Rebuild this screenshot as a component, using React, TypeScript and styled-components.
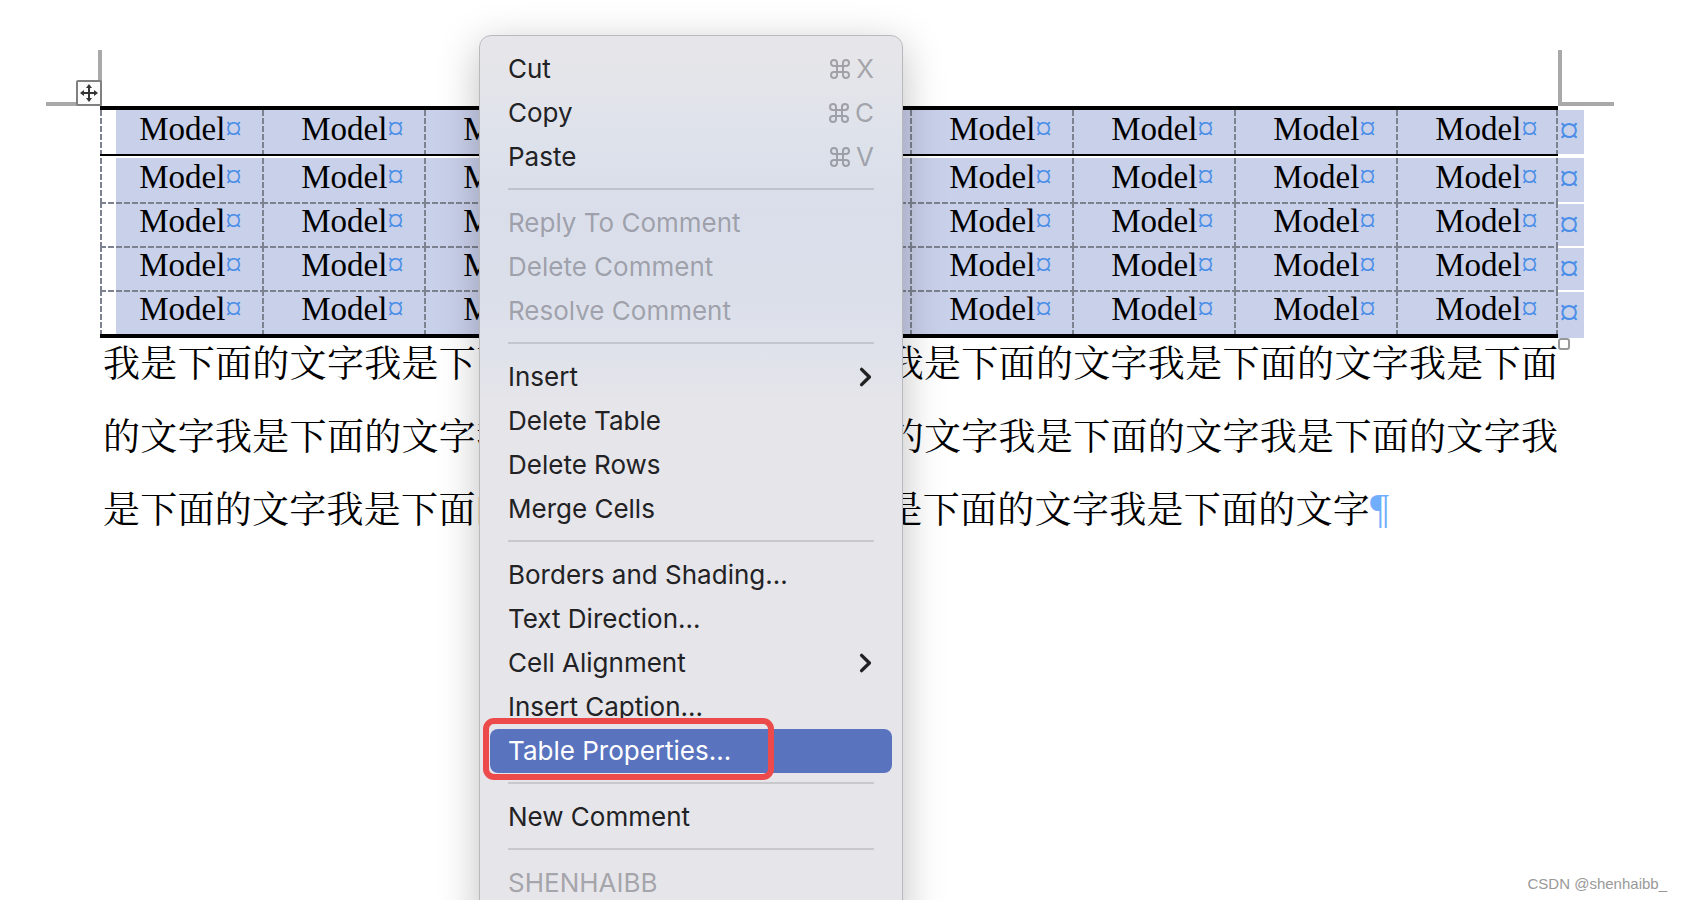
import React from "react";
import styled, { createGlobalStyle, css } from "styled-components";

const GlobalStyle = createGlobalStyle`
  *, *::before, *::after { box-sizing: border-box; }
  body { margin: 0; background: #ffffff; }
`;

const selection = "#c9d0ea";
const markBlue = "#4a8ee8";
const dashH =
  "repeating-linear-gradient(90deg, #7d8290 0 6px, transparent 6px 8px)";
const dashV =
  "repeating-linear-gradient(180deg, #7d8290 0 6px, transparent 6px 8px)";

const Page = styled.main`
  position: relative;
  min-height: 100vh;
  overflow: hidden;
  padding-top: 50px;
  color: #000000;
  font-family: "Liberation Serif", "Times New Roman", serif;
`;

const MarginMarks = styled.div`
  display: flex;
  justify-content: space-between;
  padding: 0 68px 0 46px;
`;

const Corner = styled.div<{ $side: "left" | "right" }>`
  position: relative;
  width: 56px;
  height: 56px;
  border-bottom: 4px solid #a9a9a9;
  ${(p) =>
    p.$side === "left"
      ? css`border-right: 4px solid #a9a9a9;`
      : css`border-left: 4px solid #a9a9a9;`}
`;

const MoveHandle = styled.button`
  position: absolute;
  right: -4px;
  bottom: -4px;
  display: flex;
  align-items: center;
  justify-content: center;
  width: 26px;
  height: 26px;
  padding: 0;
  border: 2px solid #808080;
  border-radius: 2px;
  background: #fbfbfb;
`;

const TableArea = styled.div`
  position: relative;
  margin: 0 98px 0 100px;
`;

const ModelTable = styled.table`
  width: 100%;
  table-layout: fixed;
  border-collapse: separate;
  border-spacing: 0;
  font-size: 33px;
  line-height: 38px;
`;

const MarkColumn = styled.col`
  width: 26px;
`;

const cell = css`
  height: 44px;
  padding: 0 0 4px 19px;
  text-align: center;
  font-weight: 400;
  white-space: nowrap;
  vertical-align: top;
`;

const HeadCell = styled.th`
  ${cell}
  height: 50px;
  border-top: 4px solid #000000;
  border-bottom: 2px solid #000000;
  background: ${dashV} 0 0 / 2px 100% no-repeat,
    linear-gradient(${selection}, ${selection});
  &:first-child {
    background: ${dashV} 0 0 / 2px 100% no-repeat,
      linear-gradient(90deg, #ffffff 16px, ${selection} 16px);
  }
  &:nth-child(9) {
    background: ${dashV} 0 0 / 2px 100% no-repeat,
      ${dashV} 100% 0 / 2px 100% no-repeat,
      linear-gradient(${selection}, ${selection});
  }
`;

const Cell = styled.td<{ $first?: boolean; $last?: boolean }>`
  ${cell}
  ${(p) =>
    p.$first &&
    css`
      height: 46px;
      border-top: 2px solid #ffffff;
    `}
  ${(p) =>
    p.$last &&
    css`
      height: 48px;
      border-bottom: 4px solid #000000;
    `}
  background: ${dashV} 0 0 / 2px 100% no-repeat,
    ${(p) => (p.$first ? "" : `${dashH} 0 0 / 100% 2px no-repeat,`)}
    linear-gradient(${selection}, ${selection}) padding-box;
  &:first-child {
    background: ${dashV} 0 0 / 2px 100% no-repeat,
      ${(p) => (p.$first ? "" : `${dashH} 0 0 / 100% 2px no-repeat,`)}
      linear-gradient(90deg, #ffffff 16px, ${selection} 16px) padding-box;
  }
  &:nth-child(9) {
    background: ${dashV} 0 0 / 2px 100% no-repeat,
      ${dashV} 100% 0 / 2px 100% no-repeat,
      ${(p) => (p.$first ? "" : `${dashH} 0 0 / 100% 2px no-repeat,`)}
      linear-gradient(${selection}, ${selection}) padding-box;
  }
`;

const RowEnd = styled.td<{ $top: number; $bottom: number }>`
  padding: 0 0 0 1px;
  border-top: ${(p) => p.$top}px solid #ffffff;
  border-bottom: ${(p) => p.$bottom}px solid #ffffff;
  background: ${selection};
  color: ${markBlue};
  font-size: 40px;
  line-height: 42px;
  text-align: left;
  vertical-align: top;
`;

const CellMark = styled.span`
  color: ${markBlue};
`;

const ResizeHandle = styled.button`
  position: absolute;
  right: 14px;
  top: 100%;
  width: 12px;
  height: 12px;
  padding: 0;
  border: 2px solid #989898;
  border-radius: 3px;
  background: #ffffff;
`;

const Paragraph = styled.p`
  margin: -13px 124px 0 103px;
  font-family: "Noto Serif CJK SC", "Noto Sans CJK SC", serif;
  font-size: 37px;
  font-weight: 400;
  line-height: 73px;
  text-align: justify;
  text-align-last: justify;
`;

const Pilcrow = styled.span`
  display: inline-block;
  width: 188px;
  color: #70aefc;
  font-family: "Liberation Serif", serif;
  font-weight: 400;
  font-size: 42px;
  line-height: 40px;
  text-align: left;
  text-align-last: left;
`;

const Menu = styled.div`
  position: absolute;
  z-index: 2;
  top: 35px;
  left: 479px;
  width: 424px;
  padding: 11px 10px 24px;
  border: 1px solid #b9b9bd;
  border-radius: 12px;
  background: linear-gradient(
    #e6e5ea 0,
    #e4e5ea 45px,
    #dee2eb 100px,
    #dadeea 170px,
    #dbdfea 260px,
    #dfe2eb 310px,
    #e5e5ea 365px
  );
  box-shadow: 0 10px 40px rgba(0, 0, 0, 0.25);
  font-family: Inter, "Liberation Sans", sans-serif;
  font-size: 26px;
  line-height: 44px;
`;

const MenuItem = styled.button<{ $active?: boolean }>`
  position: relative;
  display: flex;
  align-items: center;
  justify-content: space-between;
  width: 100%;
  height: 44px;
  padding: 0 18px;
  border: 0;
  border-radius: 8px;
  background: ${(p) => (p.$active ? "#5a73bf" : "transparent")};
  color: ${(p) => (p.$active ? "#ffffff" : "#222224")};
  font: inherit;
  text-align: left;
  white-space: nowrap;
  &:disabled {
    color: rgba(60, 60, 67, 0.4);
  }
`;

const Shortcut = styled.span`
  display: flex;
  align-items: center;
  gap: 4px;
  color: rgba(60, 60, 67, 0.4);
`;

const Separator = styled.hr`
  height: 2px;
  margin: 9px 18px 11px;
  border: 0;
  background: rgba(60, 60, 67, 0.17);
`;

const Highlight = styled.span`
  position: absolute;
  top: -11px;
  bottom: -7px;
  left: -7px;
  width: 291px;
  border: 6px solid #ed4a4b;
  border-radius: 11px;
  pointer-events: none;
`;

const Watermark = styled.footer`
  position: absolute;
  right: 15px;
  bottom: 7px;
  color: #999999;
  font-family: "Liberation Sans", Arial, sans-serif;
  font-size: 15px;
  line-height: 18px;
`;

const CommandIcon = () => (
  <svg width="24" height="24" viewBox="0 0 24 24" fill="none" stroke="currentColor" strokeWidth="2" aria-hidden="true">
    <path d="M15 6v12a3 3 0 1 0 3-3H6a3 3 0 1 0 3 3V6a3 3 0 1 0-3 3h12a3 3 0 1 0-3-3" />
  </svg>
);

const Chevron = () => (
  <svg width="16" height="22" viewBox="0 0 16 22" fill="none" stroke="currentColor" strokeWidth="3.4" strokeLinecap="round" strokeLinejoin="round" aria-hidden="true">
    <path d="M3.6 3.4 11.4 11l-7.8 7.6" />
  </svg>
);

const MoveIcon = () => (
  <svg width="18" height="18" viewBox="0 0 18 18" fill="#333333" aria-hidden="true">
    <path d="M9 0 12 4H10V8H14V6L18 9 14 12V10H10V14H12L9 18 6 14H8V10H4V12L0 9 4 6V8H8V4H6Z" />
  </svg>
);

type Entry =
  | { kind: "separator" }
  | {
      kind: "item";
      label: string;
      shortcut?: string;
      submenu?: boolean;
      disabled?: boolean;
      active?: boolean;
    };

const separator: Entry = { kind: "separator" };
const item = (label: string, rest: object = {}): Entry => ({ kind: "item", label, ...rest });

const entries: Entry[] = [
  item("Cut", { shortcut: "X" }),
  item("Copy", { shortcut: "C" }),
  item("Paste", { shortcut: "V" }),
  separator,
  item("Reply To Comment", { disabled: true }),
  item("Delete Comment", { disabled: true }),
  item("Resolve Comment", { disabled: true }),
  separator,
  item("Insert", { submenu: true }),
  item("Delete Table"),
  item("Delete Rows"),
  item("Merge Cells"),
  separator,
  item("Borders and Shading..."),
  item("Text Direction..."),
  item("Cell Alignment", { submenu: true }),
  item("Insert Caption..."),
  item("Table Properties...", { active: true }),
  separator,
  item("New Comment"),
  separator,
  item("SHENHAIBB", { disabled: true }),
];

const columns = Array.from({ length: 9 }, (_, i) => i);
const bodyRows = [0, 1, 2, 3];

const Model = () => (
  <>
    Model<CellMark>¤</CellMark>
  </>
);

export default function App() {
  return (
    <Page>
      <GlobalStyle />
      <MarginMarks>
        <Corner $side="left">
          <MoveHandle aria-label="Move table">
            <MoveIcon />
          </MoveHandle>
        </Corner>
        <Corner $side="right" />
      </MarginMarks>
      <TableArea>
        <ModelTable>
          <colgroup>
            {columns.map((c) => (
              <col key={c} />
            ))}
            <MarkColumn />
          </colgroup>
          <thead>
            <tr>
              {columns.map((c) => (
                <HeadCell key={c} scope="col">
                  <Model />
                </HeadCell>
              ))}
              <RowEnd $top={4} $bottom={2}>¤</RowEnd>
            </tr>
          </thead>
          <tbody>
            {bodyRows.map((r) => (
              <tr key={r}>
                {columns.map((c) => (
                  <Cell key={c} $first={r === 0} $last={r === 3}>
                    <Model />
                  </Cell>
                ))}
                <RowEnd $top={2} $bottom={0}>¤</RowEnd>
              </tr>
            ))}
          </tbody>
        </ModelTable>
        <ResizeHandle aria-label="Resize table" />
      </TableArea>
      <Paragraph lang="zh-CN">
        {"我是下面的文字".repeat(16)}
        <Pilcrow>¶</Pilcrow>
      </Paragraph>
      <Menu role="menu">
        {entries.map((e, i) =>
          e.kind === "separator" ? (
            <Separator key={i} />
          ) : (
            <MenuItem key={i} role="menuitem" disabled={e.disabled} $active={e.active}>
              {e.label}
              {e.shortcut && (
                <Shortcut>
                  <CommandIcon />
                  {e.shortcut}
                </Shortcut>
              )}
              {e.submenu && <Chevron />}
              {e.active && <Highlight />}
            </MenuItem>
          )
        )}
      </Menu>
      <Watermark>CSDN @shenhaibb_</Watermark>
    </Page>
  );
}
